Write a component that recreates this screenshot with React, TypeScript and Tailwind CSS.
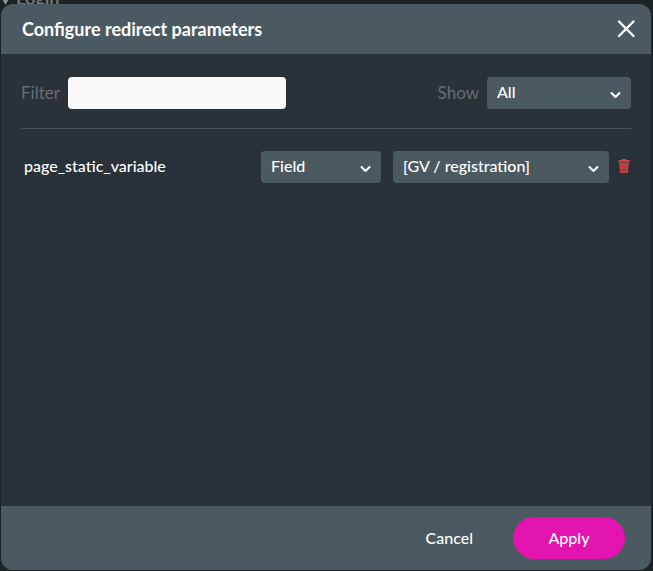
import { useState, type ReactNode } from "react";

function ChevronIcon() {
  return (
    <svg
      className="pointer-events-none absolute right-2.5 top-3.5 h-2 w-3"
      viewBox="0 0 12 8"
      fill="none"
      stroke="#fff"
      strokeWidth="2"
      strokeLinecap="round"
      strokeLinejoin="round"
      aria-hidden="true"
    >
      <path d="M2.5 2l4 4 4-4" />
    </svg>
  );
}

function CloseIcon() {
  return (
    <svg className="size-5" viewBox="0 0 20 20" fill="none" stroke="#fff" strokeWidth="2.3" strokeLinecap="round" aria-hidden="true">
      <path d="M3 2.5l14.5 14.5M17.5 2.5l-14.5 14.5" />
    </svg>
  );
}

function TrashIcon() {
  return (
    <svg className="h-4 w-3" viewBox="0 0 12 16" aria-hidden="true">
      <path d="M4 0h4v1h3.6v2.2H.4V1H4z" fill="#cb4247" />
      <path d="M1.2 3.8h9.6L9.9 14H2.1z" fill="#cb4247" />
      <path d="M3.6 5.5l.4 7M8.4 5.5l-.4 7M6 5v2.5M7 8l-2 3.5M6 11v1.5" stroke="#7a3a40" strokeWidth="0.7" fill="none" />
    </svg>
  );
}

type SelectProps = { label: string; id: string; options: string[]; className: string };

function Select({ label, id, options, className }: SelectProps) {
  return (
    <div className={`relative ${className}`}>
      <select
        id={id}
        aria-label={label}
        className="h-8 w-full appearance-none rounded bg-[#4b5a60] pl-2.5 pr-7 pb-[3px] text-base font-medium text-white outline-none"
      >
        {options.map((option) => (
          <option key={option}>{option}</option>
        ))}
      </select>
      <ChevronIcon />
    </div>
  );
}

function FieldLabel({ htmlFor, children }: { htmlFor: string; children: ReactNode }) {
  return (
    <label htmlFor={htmlFor} className="text-[17px] leading-6 text-[#6a6d73]">
      {children}
    </label>
  );
}

export default function App() {
  const [filter, setFilter] = useState("");

  return (
    <div className="relative flex min-h-screen flex-col overflow-hidden bg-[#1b2327] pt-1 pr-0.5 pb-px pl-px font-['Lato',sans-serif] text-white">
      <div className="absolute top-[-14px] left-0 flex items-center gap-1 text-lg leading-6 font-bold text-[#70777a]">
        <svg className="h-6 w-3" viewBox="0 0 12 24" aria-hidden="true">
          <path d="M0 9h11L5.500 19z" fill="#8b9194" />
        </svg>
        <span>Login</span>
      </div>

      <div role="dialog" aria-labelledby="dialog-title" className="relative flex flex-1 flex-col overflow-hidden rounded-xl bg-[#283238]">
        <header className="flex h-[50px] items-center justify-between bg-[#4b5a60] pr-[15px] pl-[21px]">
          <h1 id="dialog-title" className="text-lg leading-6 font-bold">
            Configure redirect parameters
          </h1>
          <button type="button" aria-label="Close">
            <CloseIcon />
          </button>
        </header>

        <main className="flex-1 px-5 pt-[23px]">
          <div className="flex items-center justify-between border-b border-[#465157] pb-[19px]">
            <div className="flex items-center gap-2">
              <FieldLabel htmlFor="filter">Filter</FieldLabel>
              <input
                id="filter"
                type="text"
                value={filter}
                onChange={(event) => setFilter(event.target.value)}
                className="h-8 w-[218px] rounded bg-[#fafafa] px-2 text-base text-gray-900 outline-none"
              />
            </div>
            <div className="flex items-center gap-2">
              <FieldLabel htmlFor="show">Show</FieldLabel>
              <Select id="show" label="Show" options={["All"]} className="w-36" />
            </div>
          </div>

          <div className="flex items-center pt-[22px] pl-[3px]">
            <span className="flex-1 pb-0.5 text-base font-medium">page_static_variable</span>
            <Select id="source" label="Source" options={["Field"]} className="mr-3 w-[120px]" />
            <Select id="value" label="Value" options={["[GV / registration]"]} className="w-[216px]" />
            <button type="button" aria-label="Delete parameter" className="ml-[9px] pr-px">
              <TrashIcon />
            </button>
          </div>
        </main>

        <footer className="flex h-16 items-center justify-end bg-[#4b5a60] pr-[26px] text-base font-medium">
          <button type="button" className="mr-10">
            Cancel
          </button>
          <button type="button" className="h-[42px] w-28 rounded-full bg-[#e213ae]">
            Apply
          </button>
        </footer>
      </div>
    </div>
  );
}
